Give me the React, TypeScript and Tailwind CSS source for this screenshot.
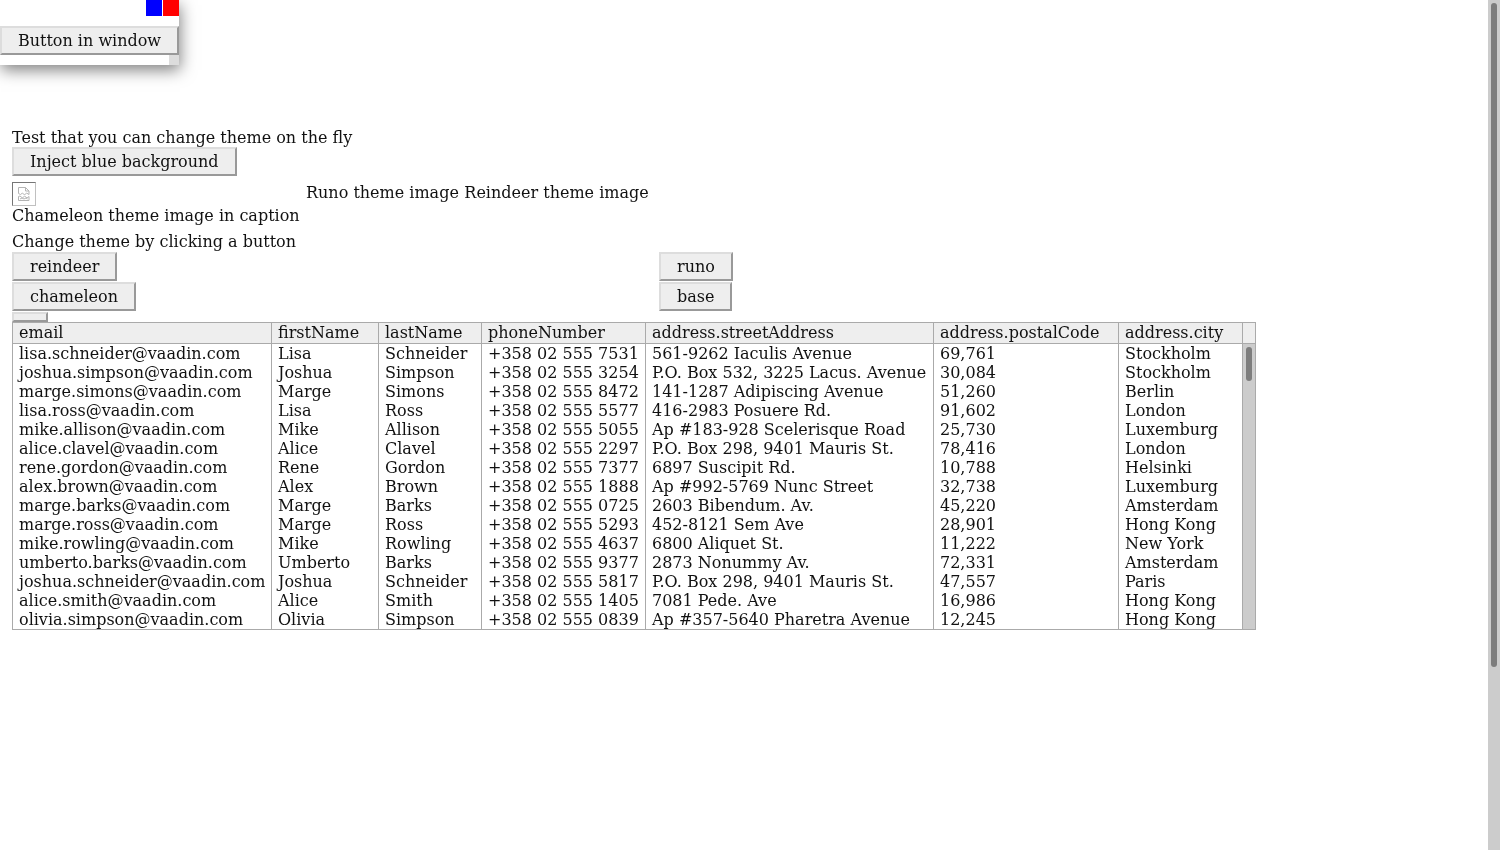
import type { ReactNode } from "react";

// Test page data: one array per grid column
const columns = [
  {
    title: "email",
    width: "w-[259px]",
    cells: [
      "lisa.schneider@vaadin.com",
      "joshua.simpson@vaadin.com",
      "marge.simons@vaadin.com",
      "lisa.ross@vaadin.com",
      "mike.allison@vaadin.com",
      "alice.clavel@vaadin.com",
      "rene.gordon@vaadin.com",
      "alex.brown@vaadin.com",
      "marge.barks@vaadin.com",
      "marge.ross@vaadin.com",
      "mike.rowling@vaadin.com",
      "umberto.barks@vaadin.com",
      "joshua.schneider@vaadin.com",
      "alice.smith@vaadin.com",
      "olivia.simpson@vaadin.com",
    ],
  },
  {
    title: "firstName",
    width: "w-[107px]",
    cells: ["Lisa", "Joshua", "Marge", "Lisa", "Mike", "Alice", "Rene", "Alex", "Marge", "Marge", "Mike", "Umberto", "Joshua", "Alice", "Olivia"],
  },
  {
    title: "lastName",
    width: "w-[103px]",
    cells: ["Schneider", "Simpson", "Simons", "Ross", "Allison", "Clavel", "Gordon", "Brown", "Barks", "Ross", "Rowling", "Barks", "Schneider", "Smith", "Simpson"],
  },
  {
    title: "phoneNumber",
    width: "w-[164px]",
    cells: [
      "+358 02 555 7531",
      "+358 02 555 3254",
      "+358 02 555 8472",
      "+358 02 555 5577",
      "+358 02 555 5055",
      "+358 02 555 2297",
      "+358 02 555 7377",
      "+358 02 555 1888",
      "+358 02 555 0725",
      "+358 02 555 5293",
      "+358 02 555 4637",
      "+358 02 555 9377",
      "+358 02 555 5817",
      "+358 02 555 1405",
      "+358 02 555 0839",
    ],
  },
  {
    title: "address.streetAddress",
    width: "w-[288px]",
    cells: [
      "561-9262 Iaculis Avenue",
      "P.O. Box 532, 3225 Lacus. Avenue",
      "141-1287 Adipiscing Avenue",
      "416-2983 Posuere Rd.",
      "Ap #183-928 Scelerisque Road",
      "P.O. Box 298, 9401 Mauris St.",
      "6897 Suscipit Rd.",
      "Ap #992-5769 Nunc Street",
      "2603 Bibendum. Av.",
      "452-8121 Sem Ave",
      "6800 Aliquet St.",
      "2873 Nonummy Av.",
      "P.O. Box 298, 9401 Mauris St.",
      "7081 Pede. Ave",
      "Ap #357-5640 Pharetra Avenue",
    ],
  },
  {
    title: "address.postalCode",
    width: "w-[185px]",
    cells: ["69,761", "30,084", "51,260", "91,602", "25,730", "78,416", "10,788", "32,738", "45,220", "28,901", "11,222", "72,331", "47,557", "16,986", "12,245"],
  },
  {
    title: "address.city",
    width: "w-[124px]",
    cells: ["Stockholm", "Stockholm", "Berlin", "London", "Luxemburg", "London", "Helsinki", "Luxemburg", "Amsterdam", "Hong Kong", "New York", "Amsterdam", "Paris", "Hong Kong", "Hong Kong"],
  },
];

function ThemeButton({ children }: { children?: ReactNode }) {
  return (
    <button className="h-[29px] px-4 bg-[#eeeeee] border-2 border-t-[#dddddd] border-l-[#dddddd] border-r-[#999999] border-b-[#999999] text-[#111111] leading-[25px]">
      {children}
    </button>
  );
}

// the browser's broken image placeholder
function BrokenImage() {
  return (
    <div className="w-6 h-6 border border-t-[#767676] border-l-[#767676] border-r-[#c0c0c0] border-b-[#c0c0c0] flex items-center justify-center">
      <svg width="14" height="16" viewBox="0 0 14 16" fill="none" stroke="#b4b4b4" strokeWidth="1">
        <path d="M1.500 7.500v-6h7l3.500 3.500v3.500l-2.500-1.500-2 2-2-2-2 1.500z" />
        <path d="M8.500 1.500v3.500h3.500" />
        <path d="M1.500 10.500v4h10.500v-4l-2 1.500-2.500-2-2 2-2.500-2z" />
        <path d="M3 13l2-1 2 1 2-1 1.500 1" />
      </svg>
    </div>
  );
}

export default function App() {
  return (
    <div className="relative flex h-[850px] overflow-hidden text-[#111111] font-['DejaVu_Serif','Liberation_Serif',serif] text-base will-change-transform">
      {/* floating window */}
      <div className="absolute left-0 top-0 w-[179px] h-[65px] bg-white shadow-[1px_5px_15px_rgba(0,0,0,0.5)] z-10">
        <div className="flex justify-end gap-px h-[26px] items-start">
          <div className="w-4 h-4 bg-[#0000ff]" />
          <div className="w-4 h-4 bg-[#ff0000]" />
        </div>
        <button className="w-full h-[29px] bg-[#eeeeee] border-2 border-t-[#dddddd] border-l-[#dddddd] border-r-[#999999] border-b-[#999999] leading-[25px]">
          Button in window
        </button>
        <div className="flex justify-end">
          <div className="w-2.5 h-2.5 bg-[#dddddd]" />
        </div>
      </div>

      <main className="flex-1 pt-[128px] pl-3">
        <div className="leading-[19px]">Test that you can change theme on the fly</div>
        <ThemeButton>Inject blue background</ThemeButton>

        <div className="flex mt-[6px] h-[44px] leading-[19px]">
          <div className="w-[294px]">
            <BrokenImage />
            <div>Chameleon theme image in caption</div>
          </div>
          <span className="pt-px">Runo theme image</span>
          <span className="pt-px ml-[5.5px]">Reindeer theme image</span>
        </div>

        <div className="mt-[6px] leading-[19px]">Change theme by clicking a button</div>
        <div className="grid grid-cols-[647px_auto] justify-start gap-y-px mt-px">
          <div><ThemeButton>reindeer</ThemeButton></div>
          <div><ThemeButton>runo</ThemeButton></div>
          <div><ThemeButton>chameleon</ThemeButton></div>
          <div><ThemeButton>base</ThemeButton></div>
        </div>
        <button className="block mt-px w-9 h-[10px] bg-[#eeeeee] border-2 border-t-[#dddddd] border-l-[#dddddd] border-r-[#999999] border-b-[#999999]" />

        {/* data grid */}
        <div className="flex w-[1244px] h-[308px] border border-[#aaaaaa] leading-[19px] overflow-hidden">
          {columns.map((col) => (
            <div key={col.title} className={`${col.width} shrink-0 border-r border-[#aaaaaa]`}>
              <div className="h-[21px] bg-[#eeeeee] border-b border-[#aaaaaa] px-[6px] whitespace-nowrap">{col.title}</div>
              {col.cells.map((cell, i) => (
                <div key={i} className="h-[19px] px-[6px] whitespace-nowrap">{cell}</div>
              ))}
            </div>
          ))}
          <div className="flex-1">
            <div className="h-[21px] bg-[#eeeeee] border-b border-[#aaaaaa]" />
            <div className="h-[285px] bg-[#cccccc] pt-[3px] pl-[3px]">
              <div className="w-[6px] h-[34px] rounded-[3px] bg-[#7d7d7d]" />
            </div>
          </div>
        </div>
      </main>

      {/* page scrollbar */}
      <aside className="w-3 h-full bg-[#cccccc] pt-[3px] pl-[3px]">
        <div className="w-[6px] h-[664px] rounded-[3px] bg-[#7d7d7d]" />
      </aside>
    </div>
  );
}
